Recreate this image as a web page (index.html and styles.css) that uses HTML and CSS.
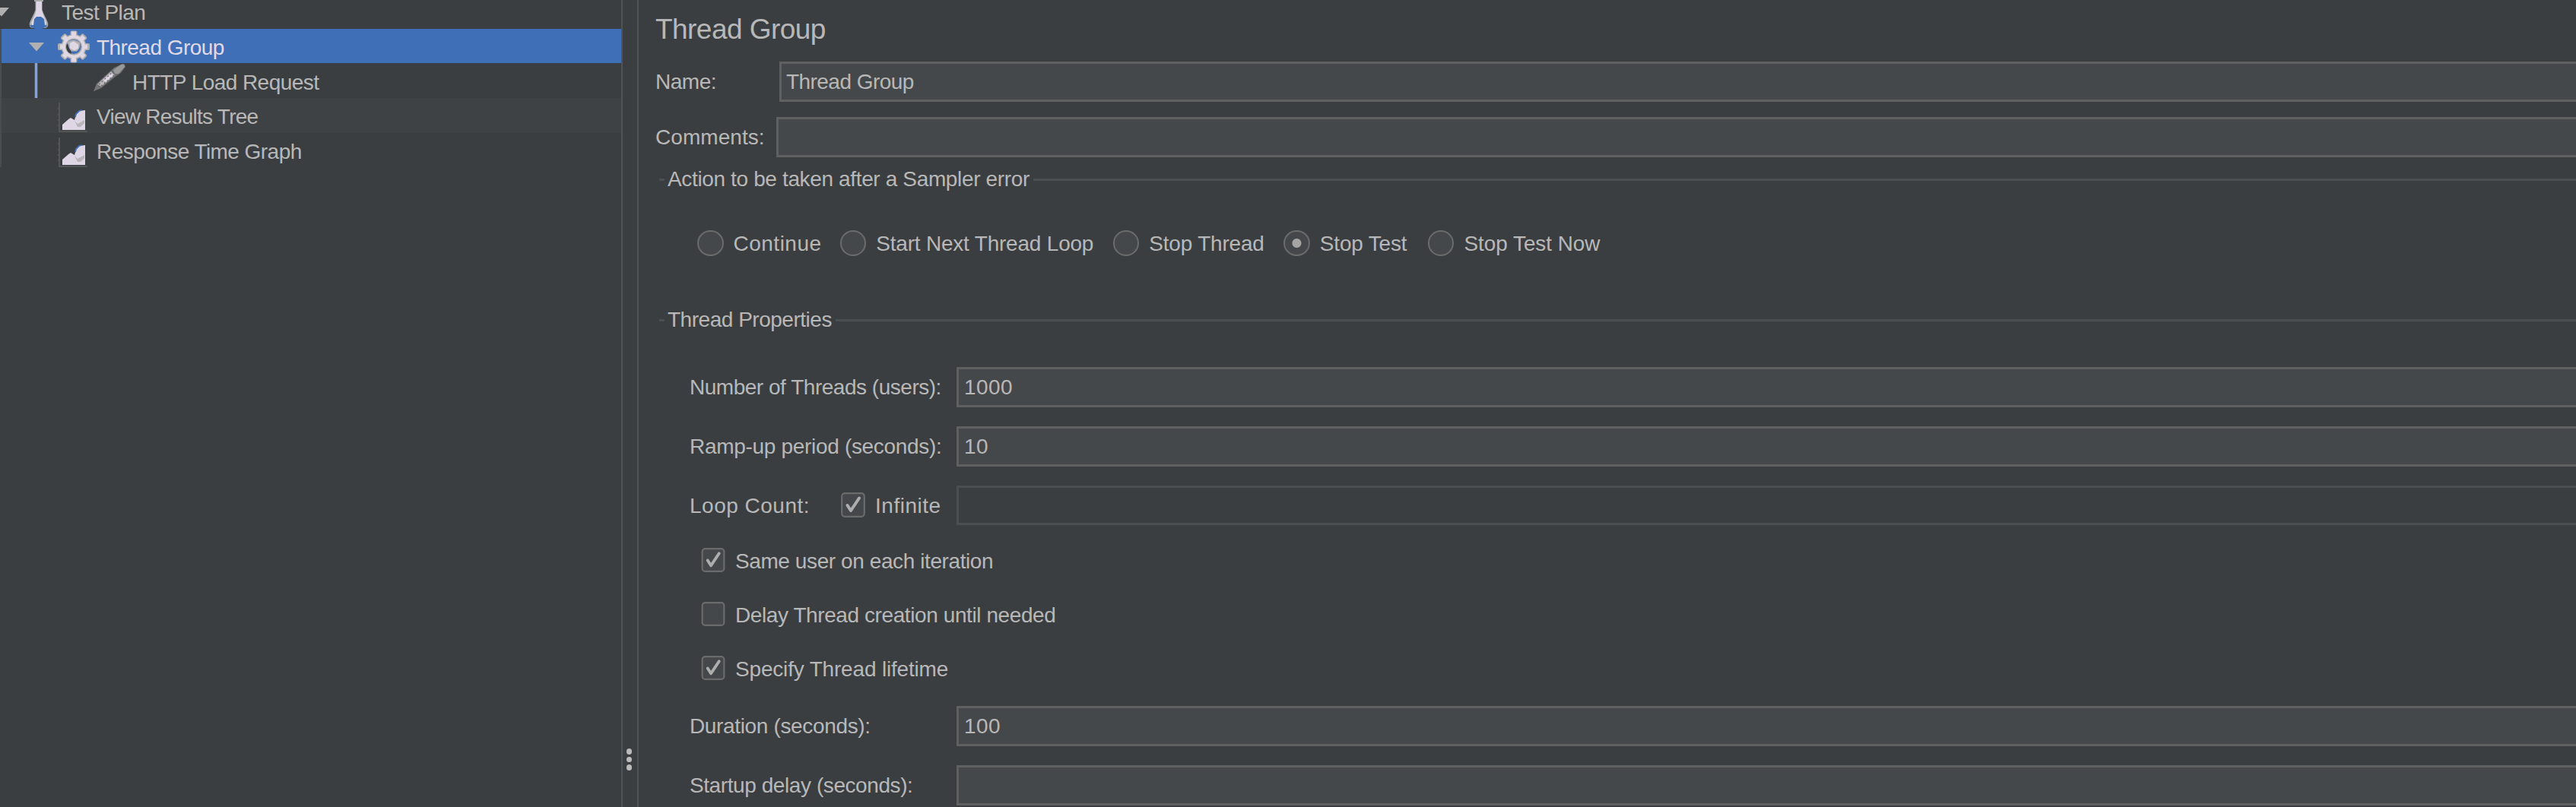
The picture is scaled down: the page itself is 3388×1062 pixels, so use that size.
FILE: index.html
```
<!DOCTYPE html>
<html lang="en">
<head>
<meta charset="utf-8">
<title>Thread Group</title>
<link rel="stylesheet" href="styles.css">
</head>
<body>
<div class="app">
  <aside class="sidebar">
    <div class="tree-row root">
      <svg class="caret" width="20" height="12" viewBox="0 0 20 12"><path d="M0 0H20L10 11.5Z"/></svg>
      <svg class="icon flask" width="26" height="38" viewBox="0 0 26 38">
        <path d="M7 0H19V2H17.5V13C19 18 23 24 25 30C26 35 24 37 20 37H6C2 37 0 35 1 30C3 24 7 18 8.500 13V2H7Z" fill="#a9a9a9"/>
        <path d="M9.500 2H17V13C18 18 21 24 23 30L21 35H5L3 30C6 24 9 18 9.500 13Z" fill="#ded6e4"/>
        <path d="M7 25L10 22H16L20 25L21 33L25 34L21 36L17 38H9L3 36L1 33L6 33Z" fill="#3f6fb6"/>
      </svg>
      <span class="label tight">Test Plan</span>
    </div>
    <div class="tree-row selected">
      <svg class="caret" width="20" height="12" viewBox="0 0 20 12"><path d="M0 0H20L10 11.500Z"/></svg>
      <svg class="icon gear" width="42" height="43" viewBox="-21 -21.500 42 43">
        <g fill="#b0aeae">
          <rect x="-4.500" y="-21" width="9" height="42" rx="2"/>
          <rect x="-4.500" y="-21" width="9" height="42" rx="2" transform="rotate(45)"/>
          <rect x="-4.500" y="-21" width="9" height="42" rx="2" transform="rotate(90)"/>
          <rect x="-4.500" y="-21" width="9" height="42" rx="2" transform="rotate(135)"/>
          <circle r="16.500"/>
        </g>
        <g fill="#dfd8e4">
          <rect x="-3" y="-20" width="6" height="40"/>
          <rect x="-3" y="-19" width="6" height="38" transform="rotate(45)"/>
          <rect x="-3" y="-18" width="6" height="36" transform="rotate(90)"/>
          <rect x="-3" y="-19" width="6" height="38" transform="rotate(135)"/>
          <circle r="15"/>
        </g>
        <circle r="11" fill="#a9a9a9"/>
        <circle r="9.500" fill="#3f6fb6"/>
        <path d="M-9.500 -3A9.800 9.800 0 0 0 -3 9.500L-4 5Q-7 2 -7 -3Z" fill="#3b3e40"/>
        <path d="M-8 -6Q0 -12 8 -5Q9 2 4 6H-3Q-7 2 -8 -6Z" fill="#b5b3b5"/>
        <path d="M-5 -5L0 -7L6 -3V2L1 5L-5 2Z" fill="#dfd8e4"/>
      </svg>
      <span class="label tight">Thread Group</span>
    </div>
    <div class="tree-row child">
      <svg class="icon pen" width="44" height="42" viewBox="0 0 44 42">
        <path d="M1 37L5 27L28 6L37 2Q42 -1 43 5L37 13L31 17L11 33Z" fill="#6b6c6d"/>
        <path d="M27 9L37 2Q42 0 42 5L34 14L29 14Z" fill="#989898"/>
        <path d="M6 28L24 11L29 16L11 31Z" fill="#b8b4b9"/>
        <path d="M14 22L25 13L27 16L17 25Z" fill="#ded6e4"/>
        <path d="M8 28L25 13M11 30L28 16" stroke="#66676a" stroke-width="1.200" stroke-dasharray="2 3"/>
        <path d="M1 37L6 29L10 33Z" fill="#777"/>
      </svg>
      <span class="label tight">HTTP Load Request</span>
    </div>
    <div class="tree-row leaf striped">
      <svg class="icon chart" width="40" height="40" viewBox="0 0 40 40">
        <path d="M3 0V38H40M1 8H4M1 16H4M1 23H4M1 30H4" fill="none" stroke="#535557" stroke-width="2"/>
        <path d="M7 36V29L15 22L18 20L23 23L25 16L29 11L37 10V36Z" fill="#ded6e4"/>
        <path d="M23 24L27 28L36 23V27L31 32L27 32Z" fill="#b9b5bb"/>
        <path d="M24 19L25 15L29 11L33 10" fill="none" stroke="#3f6fb6" stroke-width="1.800"/>
      </svg>
      <span class="label view">View Results Tree</span>
    </div>
    <div class="tree-row leaf">
      <svg class="icon chart" width="40" height="40" viewBox="0 0 40 40">
        <path d="M3 0V38H40M1 8H4M1 16H4M1 23H4M1 30H4" fill="none" stroke="#535557" stroke-width="2"/>
        <path d="M7 36V29L15 22L18 20L23 23L25 16L29 11L37 10V36Z" fill="#ded6e4"/>
        <path d="M23 24L27 28L36 23V27L31 32L27 32Z" fill="#b9b5bb"/>
        <path d="M24 19L25 15L29 11L33 10" fill="none" stroke="#3f6fb6" stroke-width="1.800"/>
      </svg>
      <span class="label tight">Response Time Graph</span>
    </div>
  </aside>
  <div class="divider"><i></i><i></i><i></i></div>
  <main class="panel">
    <h1 class="title">Thread Group</h1>
    <div class="row name-row"><span class="label name">Name:</span><div class="field"><span class="tight">Thread Group</span></div></div>
    <div class="row comments-row"><span class="label comments">Comments:</span><div class="field"></div></div>

    <div class="legend error-legend"><span class="action">Action to be taken after a Sampler error</span></div>
    <div class="radios">
      <i class="radio"></i><span class="label continue">Continue</span>
      <i class="radio"></i><span class="label next-loop">Start Next Thread Loop</span>
      <i class="radio"></i><span class="label stop-thread">Stop Thread</span>
      <i class="radio on"></i><span class="label stop-test">Stop Test</span>
      <i class="radio"></i><span class="label stop-now">Stop Test Now</span>
    </div>

    <div class="legend props-legend"><span class="props">Thread Properties</span></div>
    <div class="properties">
      <div class="row"><span class="label threads">Number of Threads (users):</span><div class="field"><span class="digits">1000</span></div></div>
      <div class="row"><span class="label ramp">Ramp-up period (seconds):</span><div class="field"><span class="digits">10</span></div></div>
      <div class="row loop-row">
        <div class="label loop-label"><span class="loop">Loop Count:</span>
          <svg class="box" width="32" height="33" viewBox="0 0 32 33"><rect class="frame" x="1.200" y="1.200" width="29.600" height="30.600" rx="4"/><path class="tick" d="M8.500 17L13 24L24 7.500"/></svg>
          <span class="infinite">Infinite</span></div>
        <div class="field disabled"></div>
      </div>
      <div class="checks">
        <div class="check"><svg class="box" width="32" height="32" viewBox="0 0 32 33"><rect class="frame" x="1.200" y="1.200" width="29.600" height="30.600" rx="4"/><path class="tick" d="M8.500 17L13 24L24 7.500"/></svg><span class="same">Same user on each iteration</span></div>
        <div class="check"><svg class="box" width="32" height="32" viewBox="0 0 32 33"><rect class="frame" x="1.200" y="1.200" width="29.600" height="30.600" rx="4"/></svg><span class="delay">Delay Thread creation until needed</span></div>
        <div class="check"><svg class="box" width="32" height="32" viewBox="0 0 32 33"><rect class="frame" x="1.200" y="1.200" width="29.600" height="30.600" rx="4"/><path class="tick" d="M8.500 17L13 24L24 7.500"/></svg><span class="specify">Specify Thread lifetime</span></div>
      </div>
      <div class="row"><span class="label duration">Duration (seconds):</span><div class="field"><span class="digits">100</span></div></div>
      <div class="row"><span class="label startup">Startup delay (seconds):</span><div class="field"></div></div>
    </div>
  </main>
</div>
</body>
</html>
```
FILE: styles.css
```
* { box-sizing: border-box; }

body {
  margin: 0;
  background: #3b3e40;
  color: #b8b8b8;
  font: 28px/32px "Liberation Sans", Arial, sans-serif;
  overflow: hidden;
}

span { white-space: nowrap; }

.app { display: flex; height: 1062px; }

/* Tree */
.sidebar { width: 817px; flex: none; overflow: hidden; }

.tree-row {
  display: flex;
  align-items: center;
  height: 45.700px;
  border-left: 2px solid #4a4d4f;
}
.tree-row .label { padding-top: 5px; }
.icon, .caret { flex: none; display: block; }
.caret { fill: #b0b0b0; }

.root { height: 38px; border-left: 0; align-items: flex-start; }
.root .caret { margin: 10px 0 0 -8px; }
.root .flask { margin-left: 26px; }
.root .label { margin-left: 17px; padding-top: 1px; }

.selected { background: #3f6fb6; color: #e2dae6; height: 45.300px; }
.selected .caret { margin: 2px 0 0 36px; }
.selected .gear { margin: 2px 0 0 18px; }
.selected .label { margin-left: 9px; }

.child::before {
  content: "";
  width: 3px;
  height: 100%;
  margin-left: 43px;
  background: #8aa3cf;
  border-left: 1px solid #3c598c;
  border-right: 1px solid #3c598c;
}
.child .pen { margin: 0 0 4px 72px; }
.child .label { margin-left: 8px; }

.leaf .chart { margin: 6px 0 0 73px; }
.leaf .label { margin-left: 12px; }
.striped { background: #3f4244; }

/* Split pane divider */
.divider {
  flex: none;
  width: 23px;
  border-left: 2px solid #505355;
  border-right: 2px solid #505355;
  display: flex;
  flex-direction: column;
  align-items: center;
  gap: 3px;
  padding: 985px 2px 0 0;
}
.divider i { width: 7px; height: 7.500px; border-radius: 50%; background: #bbb; }

/* Form */
.panel { flex: 1; min-width: 0; padding-left: 22px; }

.title {
  margin: 0 0 3px;
  font-size: 37px;
  font-weight: 400;
  line-height: 78px;
  letter-spacing: -0.550px;
}

.row { display: flex; align-items: center; height: 53px; }
.row > .label { flex: none; padding-top: 1px; }
.name-row > .label { width: 163px; }
.comments-row { margin-top: 20px; }
.comments-row > .label { width: 158.500px; }

.field {
  flex: 1;
  align-self: stretch;
  display: flex;
  align-items: center;
  border: 3px solid #5f6160;
  border-right: 0;
  background: #45484a;
  padding: 1px 0 0 6px;
}
.disabled { background: none; border-color: #4c4f51; }

.legend { display: flex; align-items: center; height: 32px; margin-left: 5px; }
.legend::before { content: ""; width: 7px; height: 3px; margin-right: 4px; background: #4c4f51; }
.legend::after { content: ""; flex: 1; height: 3px; margin-left: 5px; background: #4c4f51; }
.error-legend { margin-top: 13px; }

.radios { display: flex; align-items: center; height: 34px; margin: 51px 0 0 55px; }
.radio {
  flex: none;
  width: 34.500px;
  height: 34px;
  border-radius: 50%;
  border: 2px solid #6a6c6b;
  background: #45484a;
}
.radio.on { background: radial-gradient(circle, #a5a5a5 5.500px, #45484a 6.500px); }
.radios .label { flex: none; margin-left: 13px; padding-top: 1px; }

.props-legend { margin-top: 68px; }

.properties { margin: 46px 0 0 45px; display: flex; flex-direction: column; gap: 25px; }
.properties .row > .label { width: 351px; }
.properties .field { padding-left: 7px; }
.loop-row { height: 52px; }
.loop-label { display: flex; align-items: center; }
.loop-label .box { margin: -3px 0 0 41px; }
.loop-label .infinite { margin-left: 13px; }

.checks { display: flex; flex-direction: column; gap: 39px; margin: 5px 0 9px 15px; }
.check { display: flex; align-items: center; height: 32px; }
.check span { margin-left: 13px; padding-top: 4px; }

.box { flex: none; display: block; }
.frame { fill: #45484a; stroke: #6a6c6b; stroke-width: 2.200; }
.tick { fill: none; stroke: #adadad; stroke-width: 4; stroke-linecap: round; stroke-linejoin: round; }

/* Tracking per caption */
.tight { letter-spacing: -0.550px; }
.view { letter-spacing: -0.750px; }
.name { letter-spacing: -0.480px; }
.comments { letter-spacing: 0.050px; }
.action { letter-spacing: -0.360px; }
.continue { letter-spacing: 0.500px; width: 140.300px; }
.next-loop { letter-spacing: -0.210px; width: 311.500px; }
.stop-thread { letter-spacing: -0.200px; width: 177px; }
.stop-test { letter-spacing: -0.180px; width: 142.200px; }
.stop-now { letter-spacing: -0.080px; }
.props { letter-spacing: -0.480px; }
.threads { letter-spacing: -0.480px; }
.ramp { letter-spacing: -0.310px; }
.loop { letter-spacing: 0.500px; }
.infinite { letter-spacing: 0.500px; }
.same { letter-spacing: -0.410px; }
.delay { letter-spacing: -0.410px; }
.specify { letter-spacing: -0.180px; }
.duration { letter-spacing: -0.350px; }
.startup { letter-spacing: -0.420px; }
.digits { letter-spacing: 0.430px; }
```
